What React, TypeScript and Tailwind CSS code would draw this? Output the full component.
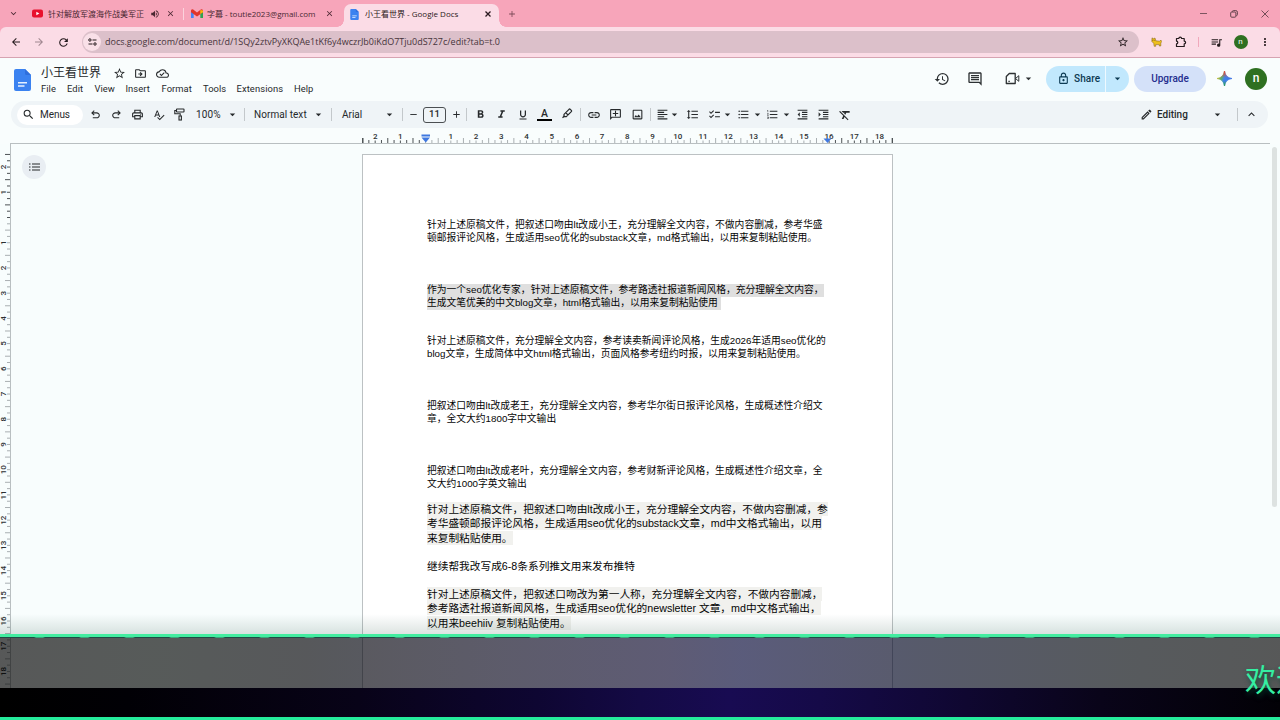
import React from "react";
import {
  MdSearch, MdOutlinePrint, MdSpellcheck, MdFormatBold, MdFormatItalic, MdFormatUnderlined, MdLink,
  MdOutlineAddComment, MdOutlineImage, MdFormatAlignLeft, MdFormatLineSpacing, MdChecklist,
  MdFormatListBulleted, MdFormatListNumbered, MdFormatIndentDecrease, MdFormatIndentIncrease,
  MdFormatClear, MdOutlineEdit, MdArrowDropDown, MdKeyboardArrowUp, MdKeyboardArrowDown, MdHistory,
  MdOutlineComment, MdOutlineLock, MdStarBorder, MdOutlineDriveFileMove, MdOutlineCloudDone, MdClose,
  MdQueueMusic, MdMoreVert, MdArrowBack, MdArrowForward, MdRefresh, MdVolumeUp,
  MdAdd, MdRemove,
} from "react-icons/md";

type CellProps = { w: string; children?: React.ReactNode };

function Cell({ w, children }: CellProps) {
  return <div className={`flex shrink-0 items-center justify-center [&>svg]:shrink-0 ${w}`}>{children}</div>;
}

function Sep({ w }: { w: string }) {
  return (
    <Cell w={w}>
      <div className="h-[13px] w-px shrink-0 bg-[#c3c8cb]" />
    </Cell>
  );
}

function Caret({ w }: { w: string }) {
  return (
    <Cell w={w}>
      <MdArrowDropDown size={13} />
    </Cell>
  );
}

function Symbol({ d, size }: { d: string; size: number }) {
  return (
    <svg width={size} height={size} viewBox="0 -960 960 960" fill="currentColor">
      <path d={d} />
    </svg>
  );
}

const UNDO =
  "M280-200v-80h284q63 0 109.5-40T720-420q0-60-46.5-100T564-560H312l104 104-56 56-200-200 200-200 56 56-104 104h252q97 0 166.5 63T800-420q0 94-69.5 157T564-200H280Z";
const REDO =
  "M396-200q-97 0-166.5-63T160-420q0-94 69.5-157T396-640h252L544-744l56-56 200 200-200 200-56-56 104-104H396q-63 0-109.5 40T240-420q0 60 46.5 100T396-280h284v80H396Z";

function DocsLogo({ w, h }: { w: number; h: number }) {
  return (
    <svg width={w} height={h} viewBox="0 0 17 22">
      <path d="M2 0h9l6 6v14a2 2 0 0 1-2 2H2a2 2 0 0 1-2-2V2a2 2 0 0 1 2-2z" fill="#3b82f0" />
      <path d="M11 0l6 6h-4.500a1.500 1.500 0 0 1-1.500-1.500z" fill="#2f6fdd" />
      <path d="M4 13h9v1.500H4zM4 16.300h6.500v1.500H4z" fill="#e6f1ff" />
    </svg>
  );
}

function TabStrip() {
  return (
    <div className="flex h-[27px] items-end bg-[#f7a5ba] font-['Open_Sans','Noto_Sans_CJK_SC',sans-serif] text-[8px] text-[#4a2832]">
      <div className="flex h-[27px] w-[344px] shrink-0 items-center">
        <Cell w="w-[26px]">
          <MdKeyboardArrowDown size={11} />
        </Cell>
        <Cell w="w-[22px]">
          <svg width="11" height="9" viewBox="0 0 11 9">
            <rect y="0.500" width="11" height="8" rx="2" fill="#e8112d" />
            <path d="M4.300 2.700v3.600l3.100-1.800z" fill="#fff" />
          </svg>
        </Cell>
        <div className="w-[96px] shrink-0 whitespace-nowrap">针对解放军渡海作战美军正</div>
        <Cell w="w-[21px]">
          <MdVolumeUp size={10} />
        </Cell>
        <Cell w="w-[11px]">
          <MdClose size={9} />
        </Cell>
        <div className="ml-[7px] h-[12px] w-px bg-[#fbd3dd]" />
        <Cell w="w-[25px]">
          <svg width="12" height="9" viewBox="0 0 12 9">
            <path d="M0 1.500V9h2.700V4.200z" fill="#4285f4" />
            <path d="M12 1.500V9H9.300V4.200z" fill="#2fa350" />
            <path d="M0 1.500Q.6-.3 2.200.5L6 3.400 9.800.5Q11.400-.3 12 1.500v1.700L6 7.500 0 3.200z" fill="#e0352b" />
            <path d="M9.300 1L12 1.500v1.700L9.300 5z" fill="#f6b90a" />
          </svg>
        </Cell>
        <div className="ml-[-2px] w-[115px] shrink-0 whitespace-nowrap">字幕 - toutie2023@gmail.com</div>
        <Cell w="w-[14px]">
          <MdClose size={9} />
        </Cell>
      </div>
      <div className="relative flex h-[23px] w-[155px] shrink-0 items-center rounded-t-[7px] bg-[#fbdce6] pb-[3px] text-[#2b1a20]">
        <div className="absolute bottom-0 left-[-7px] h-[7px] w-[7px] bg-[radial-gradient(circle_at_0_0,transparent_6.500px,#fbdce6_7px)]" />
        <div className="absolute right-[-7px] bottom-0 h-[7px] w-[7px] bg-[radial-gradient(circle_at_100%_0,transparent_6.500px,#fbdce6_7px)]" />
        <Cell w="w-[21px]">
          <DocsLogo w={9} h={11} />
        </Cell>
        <div className="w-[115px] shrink-0 whitespace-nowrap">小王看世界 - Google Docs</div>
        <Cell w="w-[15px]">
          <svg width="6" height="6" viewBox="0 0 6 6" stroke="currentColor" strokeWidth="1.300">
            <path d="M.5.5l5 5M5.500.5l-5 5" />
          </svg>
        </Cell>
      </div>
      <div className="flex h-[27px] items-center text-[#7c4a58]">
        <Cell w="w-[26px]">
          <MdAdd size={10} />
        </Cell>
      </div>
      <div className="ml-auto flex h-[27px] items-center text-[#63434c]">
        <Cell w="w-[30px]">
          <div className="h-px w-[7px] bg-[#7c5560]" />
        </Cell>
        <Cell w="w-[31px]">
          <svg width="8" height="8" viewBox="0 0 8 8" fill="none" stroke="currentColor">
            <rect x="0.700" y="2" width="5.200" height="5.200" rx="1" />
            <path d="M2.400 1.900V1.600a1 1 0 0 1 1-1h2.400a1.600 1.600 0 0 1 1.600 1.600v2.400a1 1 0 0 1-1 1" />
          </svg>
        </Cell>
        <Cell w="w-[31px]">
          <svg width="8" height="8" viewBox="0 0 8 8" stroke="currentColor" strokeWidth="0.900">
            <path d="M.5.5l7 7M7.500.5l-7 7" />
          </svg>
        </Cell>
      </div>
    </div>
  );
}

function AddressBar() {
  return (
    <div className="bg-[#f7a5ba]">
      <div className="flex h-[31px] items-center rounded-t-[6px] border-b border-[#d6a3b1] bg-[#fbdce6] text-[#241a1d]">
        <Cell w="w-[31px]">
          <MdArrowBack size={12} />
        </Cell>
        <Cell w="w-[16px] text-[#a08790]">
          <MdArrowForward size={12} />
        </Cell>
        <Cell w="w-[33px]">
          <MdRefresh size={13} />
        </Cell>
        <div className="ml-[2px] flex h-[22px] w-[1057px] shrink-0 items-center rounded-full bg-[#dcc0ca]">
          <div className="ml-px flex h-[18px] w-[18px] items-center justify-center rounded-full bg-[#f9e0e8]">
            <svg width="9" height="8" viewBox="0 0 9 8" fill="none" stroke="currentColor">
              <circle cx="1.900" cy="2" r="1.200" />
              <path d="M4.500 2h4M.5 6h4" />
              <circle cx="7" cy="6" r="1.200" />
            </svg>
          </div>
          <div className="ml-[4px] w-[1013px] font-['Open_Sans',sans-serif] text-[9px] tracking-[-0.010px] whitespace-nowrap text-[#47343b]">
            docs.google.com/document/d/1SQy2ztvPyXKQAe1tKf6y4wczrJb0iKdO7Tju0dS727c/edit?tab=t.0
          </div>
          <MdStarBorder className="ml-[-1px] shrink-0" size={12} />
        </div>
        <Cell w="w-[34px]">
          <svg width="11" height="10" viewBox="0 0 11 10">
            <path d="M1 .8l1.200 1 1.800-.8.800 2.800 4 .4L9.800 3l1 1.500-1 1.500v3H8.300V7.600H4.700V9.300H3.200L2.700 6.300.8 4.400z" fill="#eebf1d" stroke="#7a5a12" strokeWidth="0.500" />
            <path d="M1.500 3.300h.8M3.500 3.300h.6" stroke="#33220a" strokeWidth="0.700" />
          </svg>
        </Cell>
        <Cell w="w-[16px]">
          <svg width="12" height="12" viewBox="0 0 12 12" fill="none" stroke="currentColor" strokeWidth="1.200" strokeLinejoin="round">
            <path d="M1.500 2.500h2.300q.1-1.300 1.400-1.300t1.400 1.300h2.600v2.600q1.400.1 1.400 1.400T9.200 7.900v2.600H1.500V7.900q1.300-.1 1.300-1.400T1.500 5.100z" />
          </svg>
        </Cell>
        <Cell w="w-[19px]">
          <div className="h-[10px] w-px bg-[#f0a9bc]" />
        </Cell>
        <Cell w="w-[17px]">
          <MdQueueMusic size={13} />
        </Cell>
        <Cell w="w-[31px]">
          <div className="flex h-[14px] w-[14px] items-center justify-center rounded-full bg-[#2f7021] pb-px font-['Roboto',sans-serif] text-[8px] text-white">n</div>
        </Cell>
        <Cell w="w-[17px]">
          <MdMoreVert size={12} />
        </Cell>
      </div>
    </div>
  );
}

function Header() {
  return (
    <div className="flex h-[43px] font-['Roboto','Noto_Sans_CJK_SC',sans-serif] text-[#26292b]">
      <div className="w-[41px] shrink-0 pt-[11px] pl-[14px]">
        <DocsLogo w={17} h={22} />
      </div>
      <div className="w-[890px] shrink-0 pt-[7px]">
        <div className="flex h-[17px] items-center text-[12px] leading-[17px]">
          <div className="w-[68px] whitespace-nowrap">小王看世界</div>
          <Cell w="w-[20px]"><MdStarBorder size={13} /></Cell>
          <Cell w="w-[22px]"><MdOutlineDriveFileMove size={13} /></Cell>
          <Cell w="w-[22px]"><MdOutlineCloudDone size={13} /></Cell>
        </div>
        <div className="mt-px flex h-[13px] items-center text-[9.4px] tracking-[0.05px] whitespace-nowrap">
          <div className="w-[26px]">File</div>
          <div className="w-[27.500px]">Edit</div>
          <div className="w-[31px]">View</div>
          <div className="w-[36px]">Insert</div>
          <div className="w-[41.500px]">Format</div>
          <div className="w-[33.500px]">Tools</div>
          <div className="w-[57.500px] tracking-[0.1px]">Extensions</div>
          <div>Help</div>
        </div>
      </div>
      <div className="flex h-[41px] items-center text-[#2d3133]">
        <Cell w="w-[22px]"><MdHistory size={16} /></Cell>
        <Cell w="w-[44px]"><MdOutlineComment size={16} /></Cell>
        <Cell w="w-[30px]">
          <svg width="15" height="13" viewBox="0 0 15 13" fill="none" stroke="currentColor" strokeWidth="1.300">
            <path d="M4.300 1.500h5.900v10H1.300V4.500z" strokeLinejoin="round" />
            <path d="M10.500 6.500l3.300-2.800v5.600z" strokeWidth="1" />
            <path d="M3.400 9.300h1.400" />
          </svg>
        </Cell>
        <Caret w="w-[2px]" />
        <div className="ml-[17px] flex h-[26px] w-[83px] items-center overflow-hidden rounded-full bg-[#c1e8fd] text-[10px] font-medium text-[#0c3a53]">
          <div className="flex h-full w-[60px] items-center border-r border-[#eef9ff] pl-[11px]">
            <MdOutlineLock size={13} />
            <span className="ml-[4px] tracking-[0.1px]">Share</span>
          </div>
          <Caret w="w-[22px]" />
        </div>
        <div className="ml-[5px] flex h-[26px] w-[72px] items-center justify-center rounded-full bg-[#d4e1f9] text-[10px] font-medium text-[#252e8e]">Upgrade</div>
        <Cell w="w-[36px]">
          <svg width="15" height="15" viewBox="0 0 15 15">
            <defs>
              <linearGradient id="spark" x1="0" y1="0.300" x2="1" y2="0.700">
                <stop offset="0" stopColor="#f0bd25" />
                <stop offset="0.300" stopColor="#5fae68" />
                <stop offset="0.500" stopColor="#3f82ee" />
                <stop offset="1" stopColor="#3d6fe0" />
              </linearGradient>
              <linearGradient id="sparkTop" x1="0" y1="0" x2="0" y2="1">
                <stop offset="0" stopColor="#e8413a" />
                <stop offset="0.450" stopColor="#e8413a" stopOpacity="0" />
                <stop offset="0.650" stopColor="#2fa350" stopOpacity="0" />
                <stop offset="1" stopColor="#2fa350" />
              </linearGradient>
            </defs>
            <path d="M7.500 0Q8.300 6.700 15 7.500 8.300 8.300 7.500 15 6.700 8.300 0 7.500 6.700 6.700 7.500 0z" fill="url(#spark)" stroke="url(#spark)" strokeWidth="0.800" />
            <path d="M7.500 0Q8.300 6.700 15 7.500 8.300 8.300 7.500 15 6.700 8.300 0 7.500 6.700 6.700 7.500 0z" fill="url(#sparkTop)" stroke="url(#sparkTop)" strokeWidth="0.800" />
          </svg>
        </Cell>
        <div className="ml-[3px] flex h-[22px] w-[22px] items-center justify-center rounded-full bg-[#2f7021] pb-px text-[12px] font-medium text-white">n</div>
      </div>
    </div>
  );
}

function Toolbar() {
  return (
    <div className="ml-[11px] flex h-[27px] w-[1257px] items-center rounded-full bg-[#eff4f7] pl-[6px] font-['Roboto',sans-serif] text-[10px] whitespace-nowrap text-[#26292b]">
      <div className="flex h-[20px] w-[66px] shrink-0 items-center rounded-full bg-white pl-[5px]">
        <MdSearch size={13} />
        <span className="ml-[5px] tracking-[-0.050px]">Menus</span>
      </div>
      <Cell w="w-[24px]"><Symbol d={UNDO} size={13} /></Cell>
      <Cell w="w-[18px]"><Symbol d={REDO} size={13} /></Cell>
      <Cell w="w-[24px]"><MdOutlinePrint size={13} /></Cell>
      <Cell w="w-[19px]"><MdSpellcheck size={12} /></Cell>
      <Cell w="w-[23px]">
        <svg width="11" height="13" viewBox="0 0 11 13" fill="none" stroke="currentColor" strokeWidth="1.100">
          <rect x="2.500" y="1" width="7.500" height="3" rx="0.500" />
          <path d="M2.500 2.500H.8v3.300h5.400v2" />
          <rect x="5" y="8" width="2.400" height="4" />
        </svg>
      </Cell>
      <div className="w-[33px] shrink-0 pl-[5px] tracking-[0.1px]">100%</div>
      <Caret w="w-[16px]" />
      <Sep w="w-[8px]" />
      <div className="w-[63px] shrink-0 pl-[6px] tracking-[0.05px]">Normal text</div>
      <Caret w="w-[15px]" />
      <Sep w="w-[10px]" />
      <div className="w-[46px] shrink-0 pl-[6px]">Arial</div>
      <Caret w="w-[15px]" />
      <Sep w="w-[11px]" />
      <Cell w="w-[10px]"><MdRemove size={11} /></Cell>
      <div className="ml-[5px] flex h-[16px] w-[23px] shrink-0 items-center justify-center rounded-[3px] border border-[#4b4f52] text-[9.5px] font-medium">11</div>
      <Cell w="w-[20px]"><MdAdd size={11} /></Cell>
      <Sep w="w-px" />
      <Cell w="w-[26px]"><MdFormatBold size={13} /></Cell>
      <Cell w="w-[17px]"><MdFormatItalic size={13} /></Cell>
      <Cell w="w-[25px]"><MdFormatUnderlined size={12} /></Cell>
      <Cell w="w-[19px]">
        <div className="flex w-[15px] shrink-0 flex-col items-center border-b-2 border-black text-[10.500px] leading-[11px] font-medium">A</div>
      </Cell>
      <Cell w="w-[26px]">
        <svg className="mb-[2px]" width="12" height="12" viewBox="0 0 12 12" fill="none" stroke="currentColor" strokeWidth="1.200">
          <path d="M3 6.300L8 1.300q.7-.6 1.300 0l1 1q.6.600 0 1.300l-5 5H3zM4.700 4.600L7 7" strokeLinejoin="round" />
          <path d="M3.500 8l-2 1.800" />
        </svg>
      </Cell>
      <Sep w="w-px" />
      <Cell w="w-[26px]"><MdLink size={14} /></Cell>
      <Cell w="w-[17px]"><MdOutlineAddComment className="-scale-x-100" size={13} /></Cell>
      <Cell w="w-[26px]"><MdOutlineImage size={13} /></Cell>
      <Sep w="w-px" />
      <Cell w="ml-[2px] w-[18px]"><MdFormatAlignLeft size={13} /></Cell>
      <Caret w="w-[6px]" />
      <Cell w="ml-[2px] w-[26px]"><MdFormatLineSpacing size={13} /></Cell>
      <Cell w="w-[18px]"><MdChecklist size={13} /></Cell>
      <Caret w="w-[9px]" />
      <Cell w="w-[22px]"><MdFormatListBulleted size={13} /></Cell>
      <Caret w="w-[7px]" />
      <Cell w="w-[23px]"><MdFormatListNumbered size={13} /></Cell>
      <Caret w="w-[5px]" />
      <Cell w="ml-px w-[24px]"><MdFormatIndentDecrease size={13} /></Cell>
      <Cell w="w-[18px]"><MdFormatIndentIncrease size={13} /></Cell>
      <Cell w="w-[25px]"><MdFormatClear size={14} /></Cell>
      <Cell w="ml-[279px] w-[20px]"><MdOutlineEdit size={13} /></Cell>
      <div className="w-[50px] shrink-0 pl-px font-medium">Editing</div>
      <Caret w="w-[22px]" />
      <Sep w="w-[19px]" />
      <Cell w="w-[8px]"><MdKeyboardArrowUp size={13} /></Cell>
    </div>
  );
}

const UNIT = 25.22;

function HorizontalRuler() {
  const zero = 425.6;
  const ticks: React.ReactNode[] = [];
  for (let i = -10; i <= 74; i++) {
    const x = zero + (i * UNIT) / 4;
    const labelled = i % 4 === 0;
    const h = labelled ? 2.5 : i % 2 === 0 ? 5 : 3;
    const outside = i < 0 || i > 63;
    ticks.push(<path key={i} d={`M${x} ${12 - h}V12`} stroke={outside ? "#4d5255" : "#a9afb2"} />);
  }
  const labels = Array.from({ length: 21 }, (_, k) => k - 2).filter((n) => n !== 0);
  return (
    <svg className="block" width="1280" height="16" viewBox="0 0 1280 16" fontFamily="Roboto, sans-serif" fontSize="8" fontWeight="500" fill="#2b2f31">
      {ticks}
      <path d="M363 7v5M892.500 7v5" stroke="#4d5255" />
      {labels.map((n) => (
        <text key={n} x={zero + n * UNIT} y="8" textAnchor="middle">{Math.abs(n)}</text>
      ))}
      <path d="M421.500 3.500h8.500v2h-8.500zM421.500 6.500h8.500l-4.250 5z" fill="#3f78e0" />
      <path d="M823.500 7.500h8l-4 4.500z" fill="#3f78e0" />
      <path d="M10 12.500H1270" stroke="#b9bfc1" />
    </svg>
  );
}

function VerticalRuler() {
  const zero = 73.5;
  const ticks: React.ReactNode[] = [];
  for (let i = -10; i <= 74; i++) {
    const y = zero + (i * UNIT) / 4;
    const w = i % 4 === 0 ? 3 : i % 2 === 0 ? 5 : 3;
    ticks.push(<path key={i} d={`M${10 - w} ${y}H10`} stroke={i < 1 ? "#4d5255" : "#a9afb2"} />);
  }
  const labels = Array.from({ length: 21 }, (_, k) => k - 2).filter((n) => n !== 0);
  return (
    <svg className="block shrink-0" width="11" height="544" viewBox="0 0 11 544" fontFamily="Roboto, sans-serif" fontSize="8" fontWeight="500" fill="#2b2f31">
      {ticks}
      {labels.map((n) => (
        <text key={n} transform={`translate(6.300 ${zero + n * UNIT}) rotate(-90)`} textAnchor="middle">{Math.abs(n)}</text>
      ))}
      <path d="M10.500 0V544" stroke="#b9bfc1" />
    </svg>
  );
}

function Lines({ rows, mark }: { rows: string[]; mark?: string }) {
  return (
    <>
      {rows.map((row) => (
        <div key={row}>
          <span className={mark}>{row}</span>
        </div>
      ))}
    </>
  );
}

function Page() {
  const selected = "bg-[#dfdfdf] inline-block h-[12.930px] align-top";
  const tinted = "bg-[#f1f1ee] inline-block h-[14px] leading-[14px] align-top";
  return (
    <div className="mt-[10px] ml-[351px] h-[534px] w-[531px] shrink-0 overflow-hidden border border-b-0 border-[#bcc1c3] bg-white pl-[64px] font-['Liberation_Sans','Noto_Sans_CJK_SC',sans-serif] whitespace-nowrap text-[#050505]">
      <div className="pt-[64px] text-[9.780px] leading-[12.930px]">
        <Lines
          rows={[
            "针对上述原稿文件，把叙述口吻由lt改成小王，充分理解全文内容，不做内容删减，参考华盛",
            "顿邮报评论风格，生成适用seo优化的substack文章，md格式输出，以用来复制粘贴使用。",
          ]}
        />
        <div className="mt-[38.800px]">
          <Lines
            mark={selected}
            rows={[
              "作为一个seo优化专家，针对上述原稿文件，参考路透社报道新闻风格，充分理解全文内容，",
              "生成文笔优美的中文blog文章，html格式输出，以用来复制粘贴使用\u00a0",
            ]}
          />
        </div>
        <div className="mt-[25.900px]">
          <Lines
            rows={[
              "针对上述原稿文件，充分理解全文内容，参考读卖新闻评论风格，生成2026年适用seo优化的",
              "blog文章，生成简体中文html格式输出，页面风格参考纽约时报，以用来复制粘贴使用。",
            ]}
          />
        </div>
        <div className="mt-[38.800px]">
          <Lines
            rows={[
              "把叙述口吻由lt改成老王，充分理解全文内容，参考华尔街日报评论风格，生成概述性介绍文",
              "章，全文大约1800字中文输出",
            ]}
          />
        </div>
        <div className="mt-[38.800px]">
          <Lines
            rows={[
              "把叙述口吻由lt改成老叶，充分理解全文内容，参考财新评论风格，生成概述性介绍文章，全",
              "文大约1000字英文输出",
            ]}
          />
        </div>
      </div>
      <div className="mt-[11px] text-[10.700px] leading-[14.600px]">
        <Lines
          mark={tinted}
          rows={[
            "针对上述原稿文件，把叙述口吻由lt改成小王，充分理解全文内容，不做内容删减，参",
            "考华盛顿邮报评论风格，生成适用seo优化的substack文章，md中文格式输出，以用",
            "来复制粘贴使用。",
          ]}
        />
        <div className="mt-[13.500px]">
          <Lines rows={["继续帮我改写成6-8条系列推文用来发布推特"]} />
        </div>
        <div className="mt-[13px]">
          <Lines
            mark={tinted}
            rows={[
              "针对上述原稿文件，把叙述口吻改为第一人称，充分理解全文内容，不做内容删减，",
              "参考路透社报道新闻风格，生成适用seo优化的newsletter 文章，md中文格式输出，",
              "以用来beehiiv 复制粘贴使用。",
            ]}
          />
        </div>
      </div>
    </div>
  );
}

function Banner() {
  return (
    <div className="absolute inset-x-0 bottom-0 h-[106px] overflow-hidden">
      <div className="h-[20px] bg-linear-to-b from-transparent to-[#1c4a3a]/15" />
      <div className="h-[3px] bg-[#42eda0]" />
      <div className="h-px bg-[repeating-linear-gradient(90deg,#1f4b46_0px,#1f4b46_34px,#37a97c_36px,#37a97c_43px,#1f4b46_45px)]" />
      <div className="h-[50px] bg-[linear-gradient(90deg,rgba(0,0,0,0.65)_0%,rgba(0,4,2,0.65)_12%,rgba(0,0,4,0.65)_24%,rgba(6,4,28,0.65)_40%,rgba(8,4,42,0.65)_52%,rgba(2,4,52,0.65)_58%,rgba(0,3,28,0.65)_72%,rgba(0,3,8,0.65)_88%,rgba(0,0,0,0.65)_100%)]">
        <div className="relative z-10 ml-[1245px] pt-[19px] font-['Noto_Sans_CJK_SC',sans-serif] text-[31px] leading-[42px] whitespace-nowrap text-[#35efa2] [text-shadow:1px_3px_5px_rgba(0,70,50,0.800)]">
          欢迎
        </div>
      </div>
      <div className="h-[29px] bg-[linear-gradient(90deg,#000_0%,#010005_10%,#080318_28%,#0e0632_42%,#140a45_50%,#180b52_57%,#150a48_64%,#110838_72%,#090419_86%,#020106_100%)]" />
      <div className="h-[3px] bg-[#25eb9c]" />
    </div>
  );
}

export default function App() {
  return (
    <div className="relative flex h-[720px] w-[1280px] flex-col overflow-hidden bg-[#f9fdfd]">
      <TabStrip />
      <AddressBar />
      <Header />
      <Toolbar />
      <div className="mt-[3px] h-[13px] shrink-0 overflow-hidden">
        <HorizontalRuler />
      </div>
      <div className="flex h-[544px] shrink-0 bg-[#f8fdfd]">
        <VerticalRuler />
        <div className="flex w-[1269px] items-start">
          <div className="mt-[11px] ml-[11px] flex h-[24px] w-[24px] shrink-0 items-center justify-center rounded-full bg-[#e9eef3]">
            <svg width="11" height="8" viewBox="0 0 11 8" stroke="#26292b" strokeWidth="1.200">
              <path d="M0 1h1.500M0 4h1.500M0 7h1.500M3 1h8M3 4h8M3 7h8" />
            </svg>
          </div>
          <div className="ml-[-35px]">
            <Page />
          </div>
          <div className="mt-[3px] ml-[379px] h-[360px] w-[5px] rounded-full bg-[#dde2e1]" />
        </div>
      </div>
      <Banner />
    </div>
  );
}
